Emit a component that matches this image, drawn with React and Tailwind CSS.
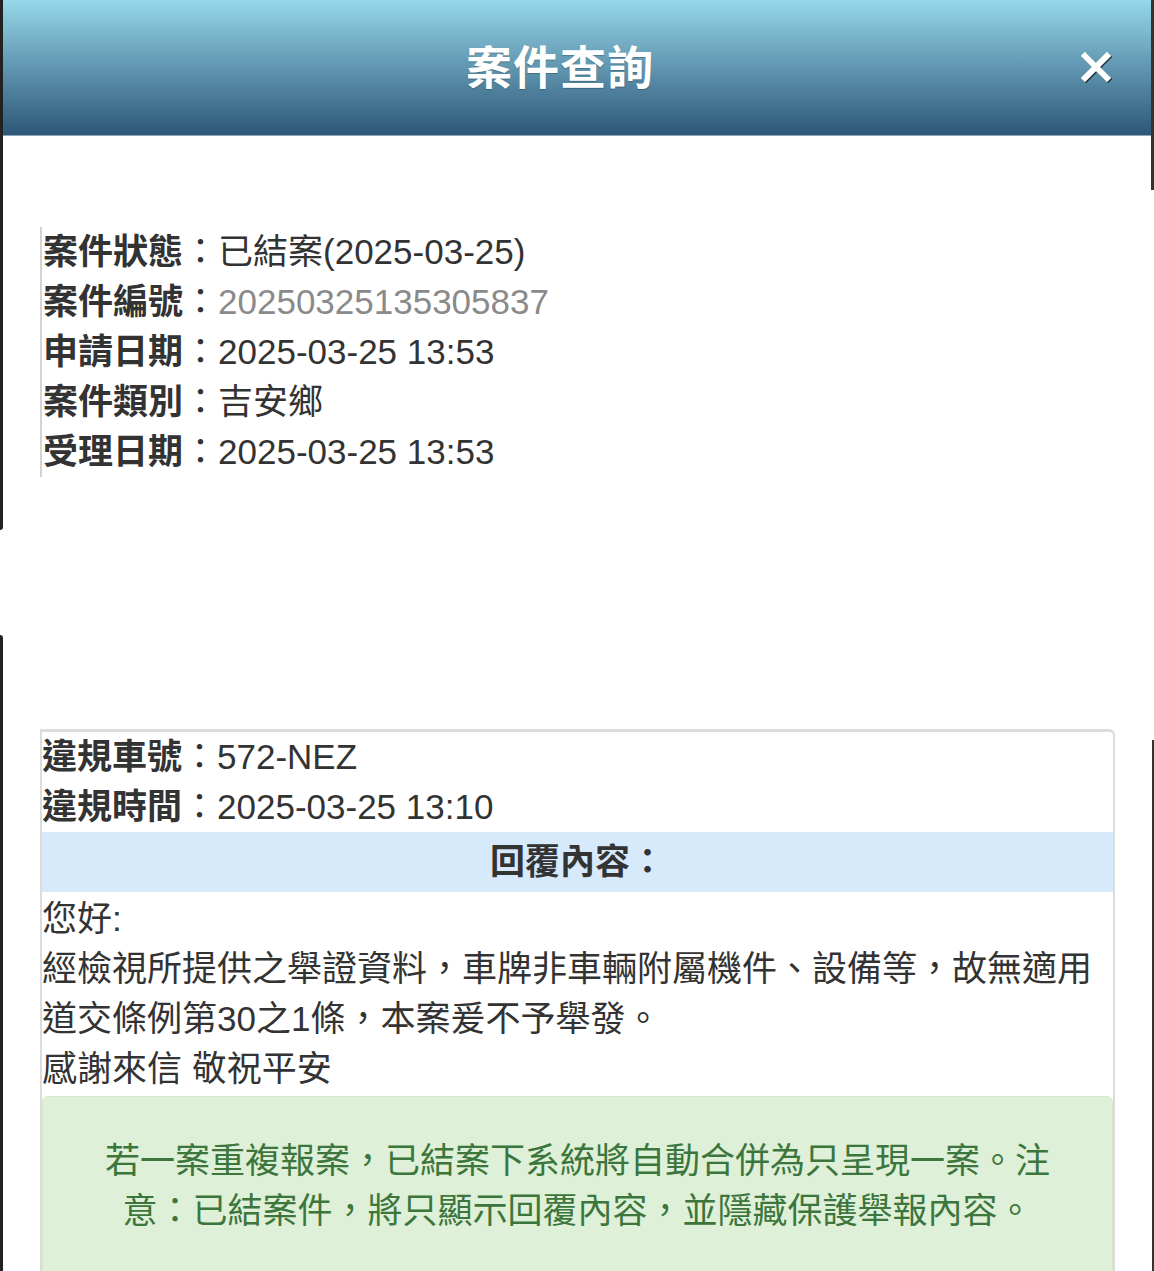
import React from 'react';

const font = { fontFamily: '"Liberation Sans", "Noto Sans CJK TC", sans-serif' };

const caseInfo = [
  { label: '案件狀態', value: '已結案(2025-03-25)' },
  { label: '案件編號', value: '20250325135305837', muted: true },
  { label: '申請日期', value: '2025-03-25 13:53' },
  { label: '案件類別', value: '吉安鄉' },
  { label: '受理日期', value: '2025-03-25 13:53' }
];

const violation = [
  { label: '違規車號', value: '572-NEZ' },
  { label: '違規時間', value: '2025-03-25 13:10' }
];

function Row({ label, value, muted }) {
  return (
    <div className="h-[50px] flex items-center whitespace-nowrap">
      <span className="font-bold text-[#333]">{label}</span>
      <span className="text-[#333]">：</span>
      <span className={muted ? 'text-[#8a8a8a]' : 'text-[#333]'}>{value}</span>
    </div>
  );
}

export default function App() {
  return (
    <div className="relative w-[1154px] h-[1271px] overflow-hidden bg-white text-[35px] leading-[50px]" style={font}>
      {/* screen edge artefacts */}
      <div className="absolute z-10 left-0 top-0 w-[3px] h-[530px] bg-[#222] rounded-br-sm" />
      <div className="absolute z-10 left-0 top-[635px] w-[3px] h-[636px] bg-[#222] rounded-tr-sm" />
      <div className="absolute z-10 right-0 top-0 w-[3px] h-[190px] bg-[#333]" />
      <div className="absolute z-10 right-0 top-[740px] w-[2px] h-[531px] bg-[#333]" />

      {/* Header */}
      <div className="relative h-[136px] flex items-center justify-center pr-[34px] bg-gradient-to-b from-[#98d8ea] to-[#2d5878] border-b border-[#8aa6b8]">
        <h1 className="text-white font-bold text-[46px] tracking-[1px] [text-shadow:0_1px_1px_rgba(0,0,0,0.25)]">案件查詢</h1>
        <button className="absolute right-[40px] top-[49px] w-[36px] h-[36px] flex items-center justify-center">
          <svg width="30" height="30" viewBox="0 0 30 30" className="drop-shadow-[1px_1px_0_rgba(0,0,0,0.7)]">
            <path d="M4 4 L26 26 M26 4 L4 26" stroke="#fff" strokeWidth="6" strokeLinecap="square" />
          </svg>
        </button>
      </div>

      {/* Case info */}
      <div className="mt-[91px] ml-[40px] border-l-2 border-[#d4d4d4] pl-px">
        {caseInfo.map((r) => <Row key={r.label} {...r} />)}
      </div>

      {/* Violation / reply */}
      <div className="mt-[252px] ml-[40px] w-[1075px] border-2 border-t-[3px] border-[#dcdcdc] rounded-tr-md">
        {violation.map((r) => <Row key={r.label} {...r} />)}
        <div className="h-[60px] flex items-center justify-center bg-[#d6eafc] font-bold text-[#333]">回覆內容：</div>
        <div className="text-[#333] pt-[2px]">
          <p>您好:</p>
          <p>經檢視所提供之舉證資料，車牌非車輛附屬機件、設備等，故無適用道交條例第30之1條，本案爰不予舉發。</p>
          <p>感謝來信 敬祝平安</p>
        </div>
        <div className="mt-[2px] h-[300px] bg-[#dff0d8] border border-[#d6e9c6] rounded-md px-[50px] pt-[39px] text-center text-[#3c763d]">
          若一案重複報案，已結案下系統將自動合併為只呈現一案。注意：已結案件，將只顯示回覆內容，並隱藏保護舉報內容。
        </div>
      </div>
    </div>
  );
}
